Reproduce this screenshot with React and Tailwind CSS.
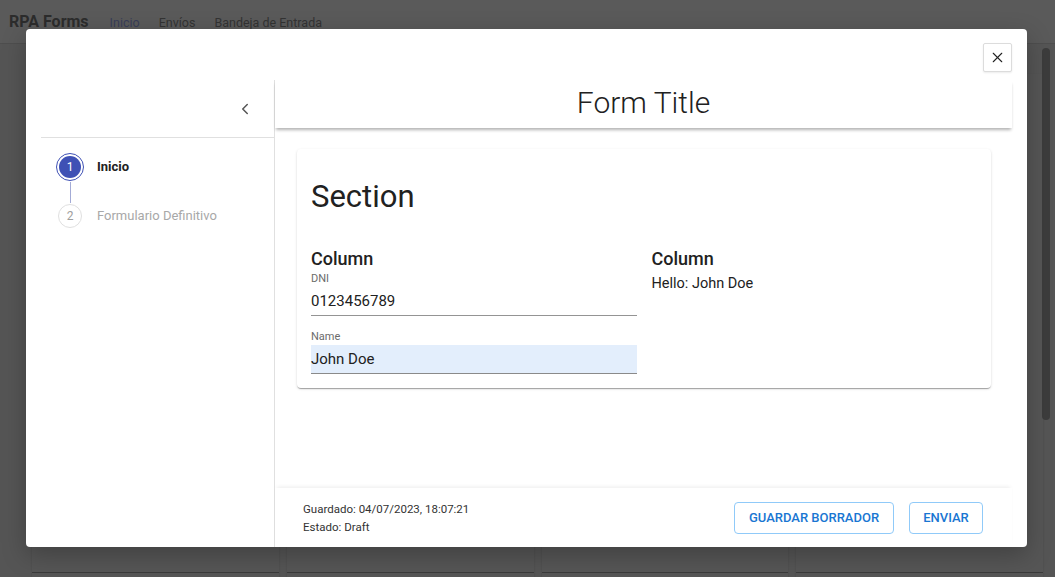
import { ChevronLeft, X } from 'lucide-react';

const steps = [
  { n: 1, label: 'Inicio', active: true },
  { n: 2, label: 'Formulario Definitivo', active: false },
];

function Stepper() {
  return (
    <div className="flex flex-col pl-[15px] pt-[15px]">
      {steps.map((s, i) => (
        <div key={s.n} className="flex flex-col">
          <div className="flex items-center gap-[13px]">
            <div className="flex w-[28px] justify-center">
              {s.active ? (
                <div className="flex h-[28px] w-[28px] items-center justify-center rounded-full border border-[#3f51b5] p-[2px]">
                  <div className="flex h-full w-full items-center justify-center rounded-full bg-[#3f51b5] text-[12px] text-white">{s.n}</div>
                </div>
              ) : (
                <div className="flex h-[24px] w-[24px] items-center justify-center rounded-full border border-[#e0e0e0] text-[12px] text-[#9e9e9e]">{s.n}</div>
              )}
            </div>
            <span className={s.active ? 'text-[13px] font-bold text-[#212121]' : 'text-[13px] text-[#a8a8a8]'}>{s.label}</span>
          </div>
          {i < steps.length - 1 && (
            <div className="flex w-[28px] justify-center py-[1px]">
              <div className="h-[21px] w-px bg-[#a3abd6]"></div>
            </div>
          )}
        </div>
      ))}
    </div>
  );
}

function Field({ label, value, filled }) {
  return (
    <div className="flex flex-col">
      <span className="text-[11px] leading-[14px] text-[#6b6b6b]">{label}</span>
      <div className={`border-b pb-[4px] pt-[4px] text-[15px] leading-[20px] text-[#212121] ${filled ? 'mt-[1px] border-[#8a8a8a] bg-[#e3eefc]' : 'mt-[1px] border-[#949494]'}`}>
        {value}
      </div>
    </div>
  );
}

export default function App() {
  return (
    <div className="relative h-[577px] w-[1055px] overflow-hidden bg-[#555555] font-['Roboto',sans-serif]">
      {/* page behind the dialog, already dimmed */}
      <header className="flex h-[44px] items-center gap-[19px] border-b border-[#4e4e4e] bg-[#5a5a5a] pl-[9px]">
        <span className="mr-[2px] text-[16px] font-bold text-[#2c2c2c]">RPA Forms</span>
        <span className="pt-[3px] text-[12.5px] text-[#383d58]">Inicio</span>
        <span className="pt-[3px] text-[12.5px] text-[#333333]">Envíos</span>
        <span className="pt-[3px] text-[12.5px] text-[#333333]">Bandeja de Entrada</span>
      </header>
      <div className="grid grid-cols-4 gap-[8px] pl-[32px] pr-[12px] pt-[30px]">
        {[0, 1, 2, 3].map(i => (
          <div key={i} className="h-[530px] bg-[#565656] shadow-[0_1px_2px_rgba(0,0,0,0.15)]">
            <div className="mt-[498px] border-t border-[#3a3a3a] pt-[3px] text-[13px] text-[#3c3c3c]">
              &nbsp;
            </div>
          </div>
        ))}
      </div>
      <div className="absolute right-[5px] top-[48px] h-[372px] w-[8px] rounded-full bg-[#3c3c3c]"></div>

      {/* dialog */}
      <div className="absolute left-[26px] top-[29px] flex h-[518px] w-[1001px] flex-col rounded-[4px] bg-white px-[15px] shadow-[0_8px_24px_rgba(0,0,0,0.25)]">
        <div className="flex h-[51px] shrink-0 items-start justify-end pt-[14px]">
          <button className="flex h-[29px] w-[29px] items-center justify-center rounded-[2px] border border-[#dcdcdc] bg-white shadow-[0_1px_2px_rgba(0,0,0,0.08)]">
            <X size={17} strokeWidth={1.5} className="text-[#222]" />
          </button>
        </div>

        <div className="flex min-h-0 flex-1">
          <aside className="flex w-[234px] shrink-0 flex-col border-r border-[#e0e0e0]">
            <div className="flex h-[58px] items-center justify-end border-b border-[#e0e0e0] pr-[20px]">
              <ChevronLeft size={18} strokeWidth={2} className="text-[#555]" />
            </div>
            <Stepper />
          </aside>

          <section className="flex min-w-0 flex-1 flex-col">
            <div className="relative z-10 flex h-[48px] shrink-0 items-center justify-center bg-white pb-[4px] shadow-[0_3px_3px_-1px_rgba(0,0,0,0.3)]">
              <h1 className="text-[30px] font-light text-[#212121]">Form Title</h1>
            </div>

            <div className="flex-1 pl-[22px] pr-[21px] pt-[21px]">
              <div className="rounded-[4px] bg-white px-[14px] pb-[14px] pt-[29px] shadow-[0_2px_1px_-1px_rgba(0,0,0,0.2),0_1px_1px_0_rgba(0,0,0,0.14),0_1px_3px_0_rgba(0,0,0,0.12)]">
                <h2 className="text-[31px] leading-[37px] text-[#212121]">Section</h2>
                <div className="mt-[32px] grid grid-cols-2 gap-[15px]">
                  <div className="flex flex-col">
                    <h3 className="mb-[1px] text-[18px] font-medium leading-[24px] text-[#212121]">Column</h3>
                    <Field label="DNI" value="0123456789" />
                    <div className="mt-[14px]">
                      <Field label="Name" value="John Doe" filled />
                    </div>
                  </div>
                  <div className="flex flex-col">
                    <h3 className="text-[18px] font-medium leading-[24px] text-[#212121]">Column</h3>
                    <p className="mt-[3px] text-[14.5px] leading-[20px] text-[#212121]">Hello: John Doe</p>
                  </div>
                </div>
              </div>
            </div>

            <footer className="flex h-[59px] shrink-0 items-center justify-between bg-white pl-[28px] pr-[29px] shadow-[0_-3px_4px_-2px_rgba(0,0,0,0.08)]">
              <div className="flex flex-col text-[11.5px] leading-[18px] text-[#333]">
                <span>Guardado: 04/07/2023, 18:07:21</span>
                <span>Estado: Draft</span>
              </div>
              <div className="flex gap-[15px]">
                <button className="flex h-[32px] w-[160px] items-center justify-center rounded-[4px] border border-[#90caf9] text-[13px] font-medium uppercase text-[#1976d2]">
                  Guardar Borrador
                </button>
                <button className="flex h-[32px] w-[74px] items-center justify-center rounded-[4px] border border-[#90caf9] text-[13px] font-medium uppercase text-[#1976d2]">
                  Enviar
                </button>
              </div>
            </footer>
          </section>
        </div>
      </div>
    </div>
  );
}
